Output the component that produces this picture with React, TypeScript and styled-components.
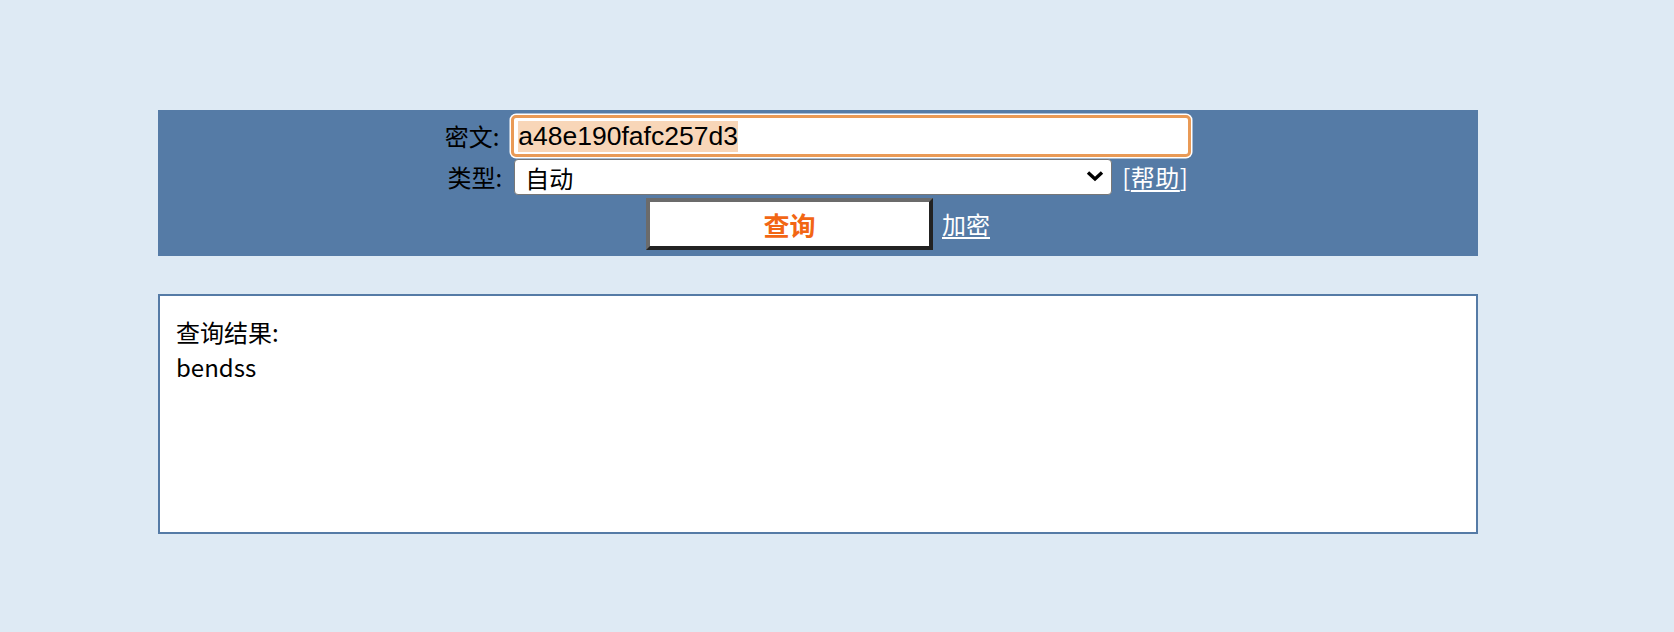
import { useEffect, useRef } from 'react';
import styled, { createGlobalStyle } from 'styled-components';

const GlobalStyle = createGlobalStyle`
  body {
    margin: 0;
    background: #deeaf4;
    font-family: "Noto Sans CJK SC", "Noto Sans", sans-serif;
    color: #000;
  }
`;

const App = () => {
  const inputRef = useRef<HTMLInputElement>(null);

  useEffect(() => {
    // 页面加载时选中密文
    inputRef.current?.focus();
    inputRef.current?.select();
  }, []);

  return (
    <>
      <GlobalStyle />
      <Page>
        <SearchBar>
          <Row>
            <Label>密文:</Label>
            <CipherInput ref={inputRef} defaultValue="a48e190fafc257d3" />
          </Row>
          <Row $mt={2}>
            <Label>类型:</Label>
            <SelectWrap>
              <TypeSelect defaultValue="auto">
                <option value="auto">自动</option>
              </TypeSelect>
              <Chevron viewBox="0 0 18 12" width="18" height="12">
                <path
                  d="M2 2.5 L9 9 L16 2.5"
                  fill="none"
                  stroke="#000"
                  strokeWidth="3.4"
                />
              </Chevron>
            </SelectWrap>
            <Help>
              [<LightLink href="#">帮助</LightLink>]
            </Help>
          </Row>
          <Row $mt={3}>
            <QueryButton type="button">查询</QueryButton>
            <LightLink href="#">加密</LightLink>
          </Row>
        </SearchBar>
        <ResultBox>
          <ResultLine>查询结果:</ResultLine>
          <ResultLine>bendss</ResultLine>
        </ResultBox>
      </Page>
    </>
  );
};

export default App;

const Page = styled.div`
  padding: 110px 0 0 158px;
`;

const SearchBar = styled.div`
  width: 1320px;
  box-sizing: border-box;
  background: #557ba6;
  padding: 5px 0 6px;
  display: flex;
  flex-direction: column;
`;

const Row = styled.div<{ $mt?: number }>`
  display: flex;
  justify-content: center;
  align-items: center;
  margin-top: ${({ $mt }) => $mt ?? 0}px;
`;

const Label = styled.span`
  font-size: 24px;
  line-height: 30px;
  margin-right: 12px;
  white-space: nowrap;
`;

const CipherInput = styled.input`
  width: 680px;
  height: 42px;
  box-sizing: border-box;
  border: 3px solid #e99a56;
  border-radius: 5px;
  box-shadow: 0 0 0 1.5px #fff;
  outline: none;
  background: #fff;
  padding: 0 4px;
  font-family: "Liberation Sans", Arial, sans-serif;
  font-size: 26.5px;
  color: #000;

  &::selection {
    background: #f8d6b8;
    color: #000;
  }
`;

const SelectWrap = styled.div`
  position: relative;
  display: flex;
`;

const TypeSelect = styled.select`
  appearance: none;
  width: 598px;
  height: 36px;
  box-sizing: border-box;
  border: 1px solid #777;
  border-radius: 4px;
  background: #fff;
  padding: 0 40px 0 10px;
  font-family: "Noto Sans CJK SC", sans-serif;
  font-size: 24px;
  color: #000;
  outline: none;
`;

const Chevron = styled.svg`
  position: absolute;
  right: 8px;
  top: 11px;
  pointer-events: none;
`;

const Help = styled.span`
  margin-left: 10px;
  font-size: 24px;
  line-height: 30px;
  letter-spacing: 0.5px;
  color: #fff;
`;

const LightLink = styled.a`
  color: #fff;
  font-size: 24px;
  line-height: 30px;
  text-decoration: underline;
  text-underline-offset: 3px;
`;

const QueryButton = styled.button`
  width: 287px;
  height: 52px;
  box-sizing: border-box;
  margin-right: 9px;
  background: #fff;
  border: 4px solid;
  border-color: #6b6b6b #222 #222 #6b6b6b;
  font-family: "Noto Sans CJK SC", sans-serif;
  font-size: 26px;
  font-weight: 700;
  color: #f26614;
  padding: 0;
  cursor: pointer;
`;

const ResultBox = styled.div`
  width: 1320px;
  height: 240px;
  box-sizing: border-box;
  margin-top: 38px;
  background: #fff;
  border: 2px solid #557ba6;
  padding: 18px 16px;
`;

const ResultLine = styled.div`
  font-size: 24px;
  line-height: 35px;
`;
